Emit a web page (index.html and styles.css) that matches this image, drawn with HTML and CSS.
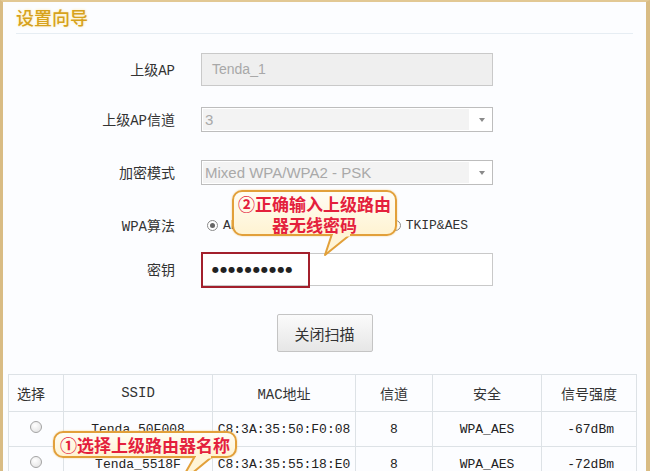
FILE: index.html
```html
<!DOCTYPE html>
<html lang="zh-CN">
<head>
  <meta charset="UTF-8" />
  <title>设置向导</title>
  <link rel="stylesheet" href="styles.css">
</head>
<body>
  <div class="frame">
    <h1 class="title">设置向导</h1>

    <div class="form">
      <label class="lbl">上级AP</label>
      <div class="field"><div class="text-box disabled">Tenda_1</div></div>

      <label class="lbl">上级AP信道</label>
      <div class="field"><div class="select"><span class="sel-val">3</span></div></div>

      <label class="lbl">加密模式</label>
      <div class="field"><div class="select"><span class="sel-val">Mixed WPA/WPA2 - PSK</span></div></div>

      <label class="lbl">WPA算法</label>
      <div class="field radios">
        <span class="opt"><span class="radio checked"></span>AES</span>
        <span class="opt"><span class="radio"></span>TKIP</span>
        <span class="opt"><span class="radio"></span>TKIP&amp;AES</span>
      </div>

      <label class="lbl">密钥</label>
      <div class="field"><div class="text-box pass"><span class="dots">●●●●●●●●●●</span><span class="mark"></span></div></div>
    </div>

    <div class="actions">
      <button class="btn">关闭扫描</button>
    </div>

    <table class="scan">
      <colgroup>
        <col style="width:55px"><col style="width:149px"><col style="width:143px">
        <col style="width:77px"><col style="width:109px"><col style="width:95px">
      </colgroup>
      <thead>
        <tr><th class="first">选择</th><th>SSID</th><th>MAC地址</th><th>信道</th><th>安全</th><th>信号强度</th></tr>
      </thead>
      <tbody>
        <tr>
          <td><span class="radio round"></span></td><td>Tenda_50F008</td><td>C8:3A:35:50:F0:08</td>
          <td>8</td><td>WPA_AES</td><td class="sig">-67dBm</td>
        </tr>
        <tr>
          <td><span class="radio round"></span></td><td>Tenda_5518F</td><td>C8:3A:35:55:18:E0</td>
          <td>8</td><td>WPA_AES</td><td class="sig">-72dBm</td>
        </tr>
      </tbody>
    </table>

    <!-- annotation bubbles -->
    <div class="callout c-key">
      <div class="bubble">②正确输入上级路由<br>器无线密码</div>
      <svg class="tail" width="40" height="24" viewBox="0 0 40 24">
        <polygon points="8,0 1,21 27,0" fill="#fff4d6" stroke="#e2a03a" stroke-width="2" stroke-linejoin="round"/>
        <rect x="9" y="0" width="17" height="2.5" fill="#fff4d6"/>
      </svg>
    </div>

    <div class="callout c-ssid">
      <div class="bubble">①选择上级路由器名称</div>
      <svg class="tail" width="44" height="30" viewBox="0 0 44 30">
        <polygon points="20,0 4,28 38,0" fill="#fff4d6" stroke="#e2a03a" stroke-width="2" stroke-linejoin="round"/>
        <rect x="21" y="0" width="15" height="2.5" fill="#fff4d6"/>
      </svg>
    </div>
  </div>
</body>
</html>
```

FILE: styles.css
```css
html, body {
  margin: 0;
  padding: 0;
}
body {
  width: 650px;
  height: 471px;
  overflow: hidden;
  font-family: "Liberation Mono", "Noto Sans CJK SC", monospace;
  color: #333;
}
.frame {
  position: relative;
  box-sizing: border-box;
  width: 650px;
  height: 471px;
  background: #fcfdff;
  border-left: 3px solid #d9bc84;
  border-right: 4px solid #d9bc84;
  border-top: 2px solid #e2c894;
  overflow: hidden;
}
.title {
  margin: 0 13px;
  padding: 5px 0 5px;
  height: 21px;
  font-family: "Noto Sans CJK SC", sans-serif;
  font-size: 18px;
  font-weight: 500;
  line-height: 21px;
  color: #d6a21c;
  text-shadow: 0 0 3px #ffe7a6;
  border-bottom: 1px solid #e6edf3;
}
.form {
  display: grid;
  grid-template-columns: 172px 292px;
  grid-template-rows: 50px 50px 56px 50px 38px;
  column-gap: 26px;
  align-items: center;
  margin-top: 10px;
}
.lbl {
  text-align: right;
  font-family: "Liberation Mono", "Noto Sans CJK SC", monospace;
  font-size: 14px;
  color: #333;
}
.text-box {
  box-sizing: border-box;
  height: 33px;
  border: 1px solid #c9c9c9;
  background: #fff;
  padding: 0 10px;
  line-height: 31px;
  font-family: "Liberation Sans", Arial, sans-serif;
  font-size: 14px;
  position: relative;
}
.text-box.disabled {
  background: #efefef;
  color: #a8a8a8;
}
.select {
  position: relative;
  box-sizing: border-box;
  height: 25px;
  border: 1px solid #bdbdbd;
  background: #fff;
  padding: 1px;
  font-family: "Liberation Sans", Arial, sans-serif;
  font-size: 15px;
  color: #a9a9a9;
}
.sel-val {
  display: block;
  width: 264px;
  height: 21px;
  line-height: 21px;
  padding-left: 2px;
  background: #f3f3f3;
}
.select::after {
  content: "";
  position: absolute;
  right: 7px;
  top: 10px;
  border-left: 3px solid transparent;
  border-right: 3px solid transparent;
  border-top: 4px solid #8a8a8a;
}
.radios {
  display: flex;
  align-items: center;
  gap: 18px;
  padding-left: 6px;
  font-size: 13px;
  color: #333;
}
.opt {
  display: flex;
  align-items: center;
  gap: 5px;
}
.radios .opt:last-child {
  margin-left: 60px;
}
.radio {
  display: inline-block;
  box-sizing: border-box;
  width: 11px;
  height: 11px;
  border: 1px solid #8a8a8a;
  border-radius: 50%;
  background: #fff;
  position: relative;
}
.radio.checked::after {
  content: "";
  position: absolute;
  left: 2px;
  top: 2px;
  width: 5px;
  height: 5px;
  border-radius: 50%;
  background: #666;
}
.radio.round {
  width: 12px;
  height: 12px;
  border-color: #a4a4a4;
  background: radial-gradient(circle at 40% 35%, #fff 0%, #e8e8e8 70%);
}
.pass {
  display: flex;
  align-items: center;
}
.dots {
  font-family: "DejaVu Sans", sans-serif;
  font-size: 8px;
  letter-spacing: 1.2px;
  color: #222;
  margin-top: 1px;
}
.mark {
  position: absolute;
  left: -1px;
  top: -2px;
  width: 105px;
  height: 32px;
  border: 2px solid #a3202c;
}
.actions {
  display: flex;
  justify-content: center;
  margin-top: 26px;
}
.btn {
  width: 96px;
  height: 38px;
  border: 1px solid #c4c4c4;
  border-radius: 2px;
  background: linear-gradient(#fbfbfb, #e6e6e6);
  font-family: "Noto Sans CJK SC", sans-serif;
  font-size: 15px;
  color: #333;
  padding: 0;
}
.scan {
  margin: 22px 0 0 5px;
  width: 628px;
  border-collapse: collapse;
  table-layout: fixed;
  font-size: 13px;
}
.scan th, .scan td {
  border: 1px solid #dde2e6;
  text-align: center;
  padding: 0;
  white-space: nowrap;
  overflow: hidden;
}
.scan th {
  height: 36px;
  font-weight: 400;
  font-size: 14px;
  font-family: "Liberation Mono", "Noto Sans CJK SC", monospace;
}
.scan th.first {
  text-align: left;
  padding-left: 8px;
}
.scan td {
  height: 34px;
  color: #222;
}
.scan td.sig {
  text-align: right;
  padding-right: 22px;
}
.callout {
  position: absolute;
}
.bubble {
  box-sizing: border-box;
  border: 2px solid #e2a03a;
  border-radius: 10px;
  background: linear-gradient(#fffdf4, #fff3d2);
  box-shadow: 0 0 2px #f3cf8a;
  font-family: "Noto Sans CJK SC", sans-serif;
  font-weight: 700;
  color: #e4203c;
  text-align: center;
}
.tail {
  position: absolute;
  display: block;
}
.c-key {
  left: 229px;
  top: 188px;
}
.c-key .bubble {
  width: 165px;
  height: 46px;
  font-size: 17px;
  line-height: 21px;
  padding-top: 1px;
}
.c-key .tail {
  left: 92px;
  top: 44px;
}
.c-ssid {
  left: 50px;
  top: 429px;
}
.c-ssid .bubble {
  width: 184px;
  height: 27px;
  font-size: 17px;
  line-height: 23px;
}
.c-ssid .tail {
  left: 122px;
  top: 25px;
}
```
